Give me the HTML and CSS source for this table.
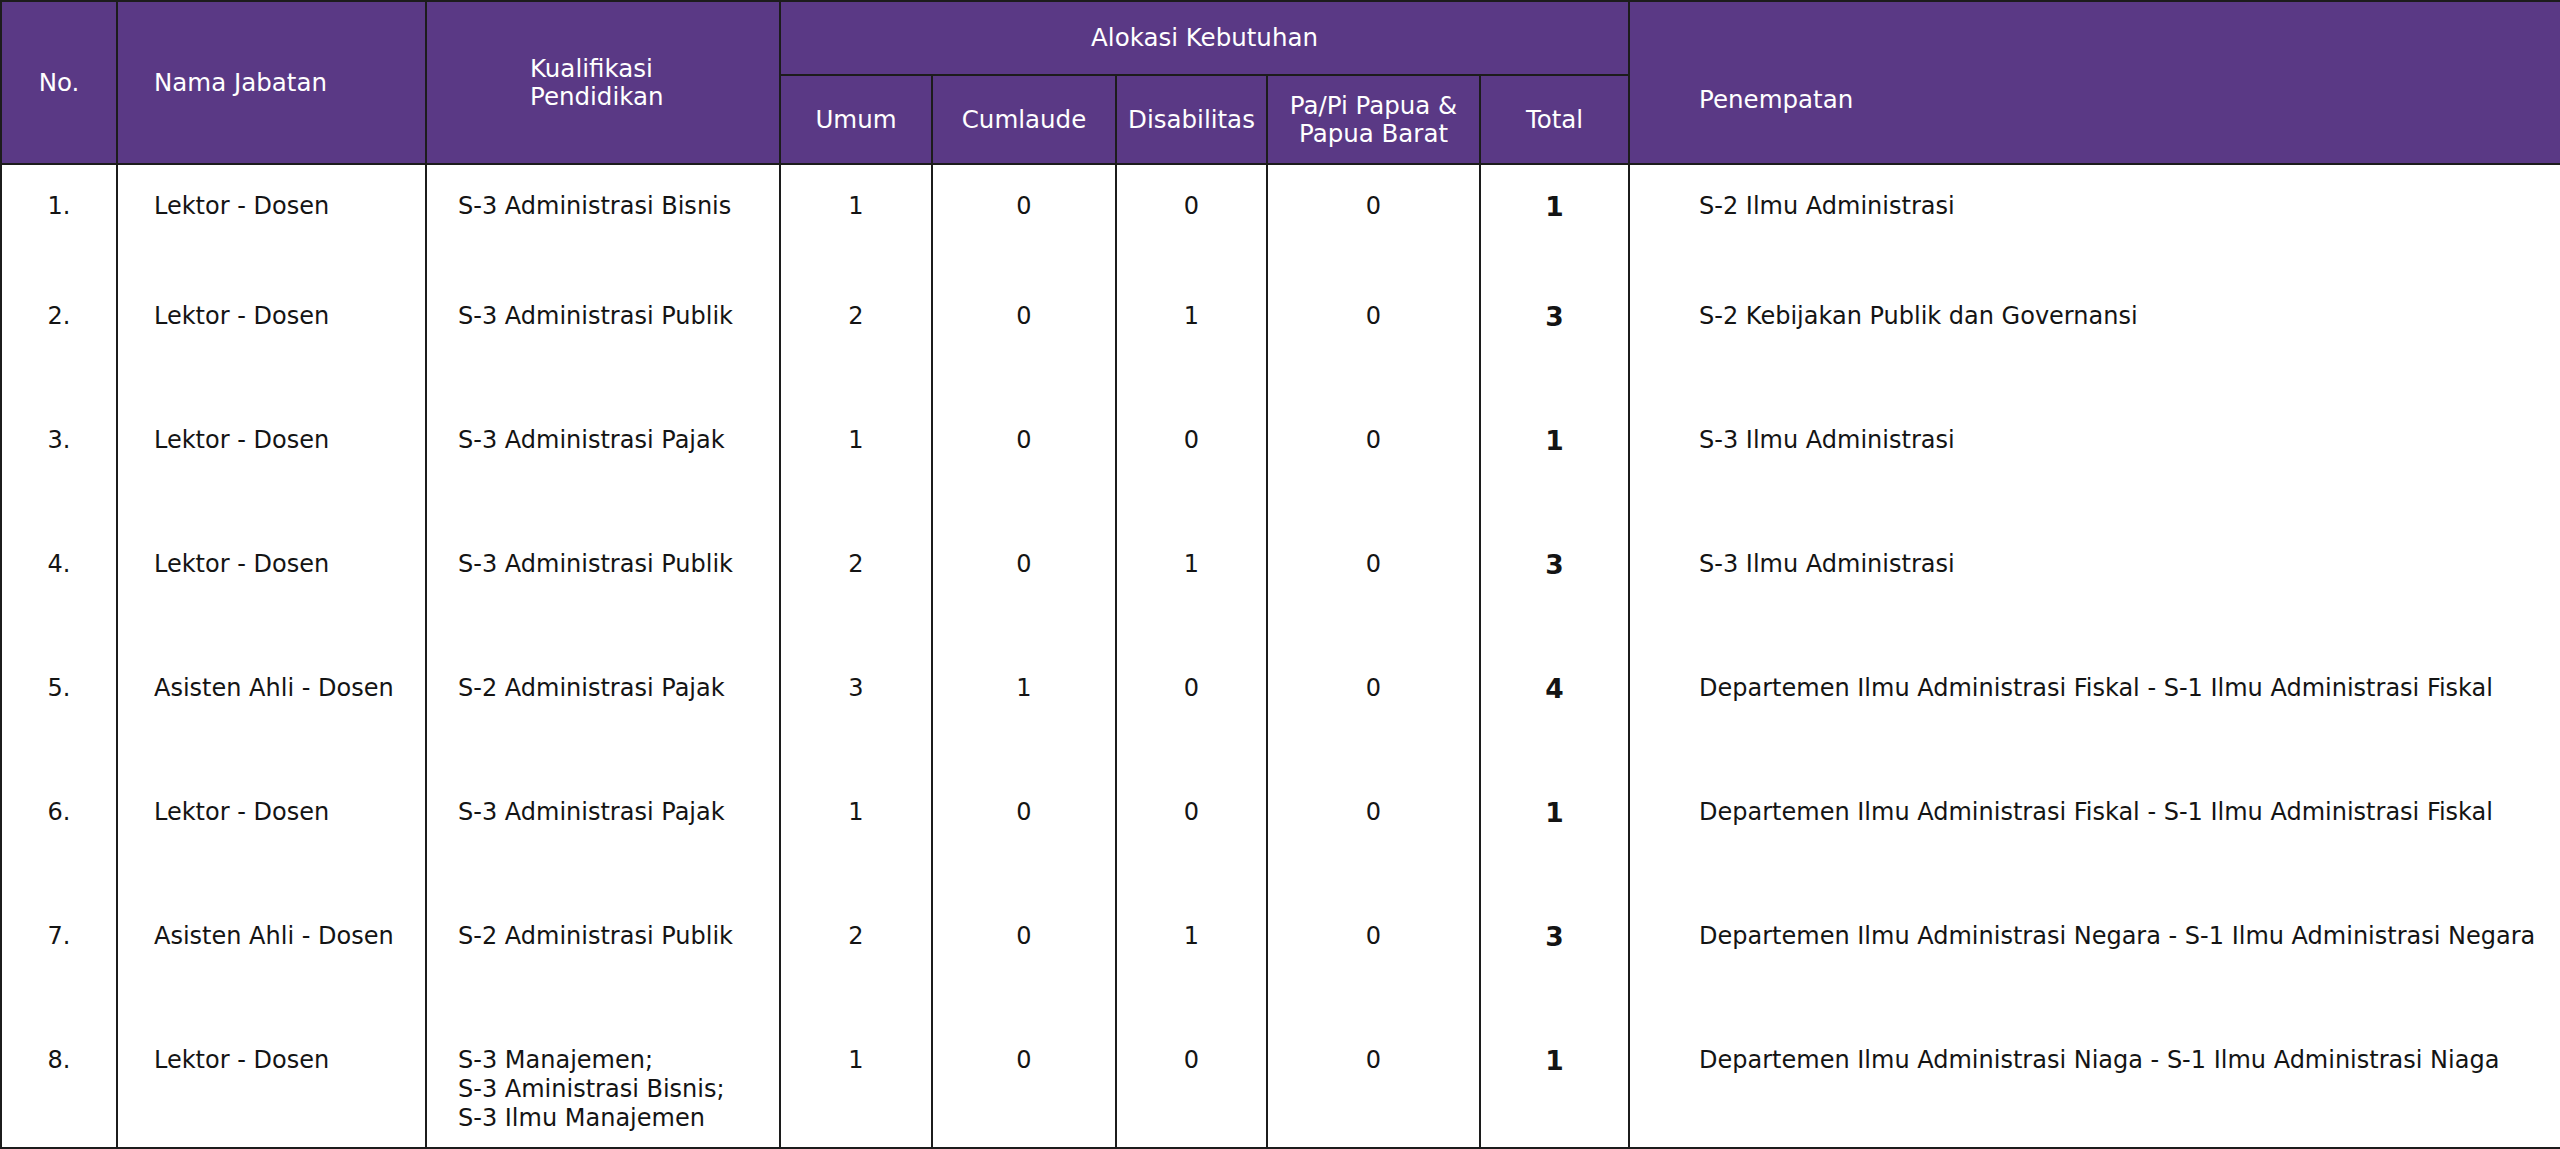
FILE: index.html
```html
<!DOCTYPE html>
<html lang="id">
<head>
<meta charset="utf-8">
<title>Alokasi Kebutuhan Dosen</title>
<link rel="stylesheet" href="styles.css">
</head>
<body>
<table class="formasi">
  <colgroup>
    <col class="c-no">
    <col class="c-nama">
    <col class="c-kual">
    <col class="c-umum">
    <col class="c-cum">
    <col class="c-dis">
    <col class="c-papua">
    <col class="c-total">
    <col class="c-pen">
  </colgroup>
  <thead>
    <tr class="h-top">
      <th rowspan="2" class="center">No.</th>
      <th rowspan="2" class="left">Nama Jabatan</th>
      <th rowspan="2" class="kual-head">Kualifikasi<br>Pendidikan</th>
      <th colspan="5" class="center">Alokasi Kebutuhan</th>
      <th rowspan="2" class="pen-head">Penempatan</th>
    </tr>
    <tr class="h-sub">
      <th class="center">Umum</th>
      <th class="center">Cumlaude</th>
      <th class="center">Disabilitas</th>
      <th class="center">Pa/Pi Papua &amp;<br>Papua Barat</th>
      <th class="center">Total</th>
    </tr>
  </thead>
  <tbody>
    <tr>
      <td class="center">1.</td><td class="nama">Lektor - Dosen</td><td class="kual">S-3 Administrasi Bisnis</td>
      <td class="center">1</td><td class="center">0</td><td class="center">0</td><td class="center">0</td><td class="total">1</td>
      <td class="pen">S-2 Ilmu Administrasi</td>
    </tr>
    <tr>
      <td class="center">2.</td><td class="nama">Lektor - Dosen</td><td class="kual">S-3 Administrasi Publik</td>
      <td class="center">2</td><td class="center">0</td><td class="center">1</td><td class="center">0</td><td class="total">3</td>
      <td class="pen">S-2 Kebijakan Publik dan Governansi</td>
    </tr>
    <tr>
      <td class="center">3.</td><td class="nama">Lektor - Dosen</td><td class="kual">S-3 Administrasi Pajak</td>
      <td class="center">1</td><td class="center">0</td><td class="center">0</td><td class="center">0</td><td class="total">1</td>
      <td class="pen">S-3 Ilmu Administrasi</td>
    </tr>
    <tr>
      <td class="center">4.</td><td class="nama">Lektor - Dosen</td><td class="kual">S-3 Administrasi Publik</td>
      <td class="center">2</td><td class="center">0</td><td class="center">1</td><td class="center">0</td><td class="total">3</td>
      <td class="pen">S-3 Ilmu Administrasi</td>
    </tr>
    <tr>
      <td class="center">5.</td><td class="nama">Asisten Ahli - Dosen</td><td class="kual">S-2 Administrasi Pajak</td>
      <td class="center">3</td><td class="center">1</td><td class="center">0</td><td class="center">0</td><td class="total">4</td>
      <td class="pen">Departemen Ilmu Administrasi Fiskal - S-1 Ilmu Administrasi Fiskal</td>
    </tr>
    <tr>
      <td class="center">6.</td><td class="nama">Lektor - Dosen</td><td class="kual">S-3 Administrasi Pajak</td>
      <td class="center">1</td><td class="center">0</td><td class="center">0</td><td class="center">0</td><td class="total">1</td>
      <td class="pen">Departemen Ilmu Administrasi Fiskal - S-1 Ilmu Administrasi Fiskal</td>
    </tr>
    <tr>
      <td class="center">7.</td><td class="nama">Asisten Ahli - Dosen</td><td class="kual">S-2 Administrasi Publik</td>
      <td class="center">2</td><td class="center">0</td><td class="center">1</td><td class="center">0</td><td class="total">3</td>
      <td class="pen">Departemen Ilmu Administrasi Negara - S-1 Ilmu Administrasi Negara</td>
    </tr>
    <tr>
      <td class="center">8.</td><td class="nama">Lektor - Dosen</td><td class="kual">S-3 Manajemen;<br>S-3 Aministrasi Bisnis;<br>S-3 Ilmu Manajemen</td>
      <td class="center">1</td><td class="center">0</td><td class="center">0</td><td class="center">0</td><td class="total">1</td>
      <td class="pen">Departemen Ilmu Administrasi Niaga - S-1 Ilmu Administrasi Niaga</td>
    </tr>
  </tbody>
</table>
</body>
</html>
```

FILE: styles.css
```css
html, body {
  margin: 0;
  padding: 0;
  background: #ffffff;
}

body {
  font-family: "DejaVu Sans", "Liberation Sans", sans-serif;
  color: #141414;
}

.formasi {
  width: 2560px;
  border-collapse: collapse;
  table-layout: fixed;
  border: 2px solid #1c1c1c;
}

.c-no { width: 116px; }
.c-nama { width: 309px; }
.c-kual { width: 354px; }
.c-umum { width: 152px; }
.c-cum { width: 184px; }
.c-dis { width: 151px; }
.c-papua { width: 213px; }
.c-total { width: 149px; }
.c-pen { width: 932px; }

.formasi th {
  background: #5a3985;
  color: #ffffff;
  font-weight: 400;
  font-size: 24.5px;
  line-height: 28px;
  border: 2px solid #1c1c1c;
  padding: 0;
  vertical-align: middle;
  white-space: nowrap;
}

.h-top { height: 74px; }
.h-sub { height: 89px; }

.formasi th.center { text-align: center; }
.formasi th.left { text-align: left; padding-left: 36px; }
.formasi th.kual-head { text-align: left; padding-left: 103px; }
.formasi th.pen-head { text-align: left; padding-left: 69px; padding-top: 34px; }

.formasi td {
  font-size: 24px;
  line-height: 29px;
  border-left: 2px solid #1c1c1c;
  border-right: 2px solid #1c1c1c;
  vertical-align: top;
  padding: 27px 0 14px 0;
  white-space: nowrap;
}

.formasi tbody tr { height: 124px; }
.formasi tbody tr:first-child { height: 111px; }

.formasi td.center { text-align: center; }
.formasi td.nama { padding-left: 36px; }
.formasi td.kual { padding-left: 31px; }
.formasi td.pen { padding-left: 69px; }
.formasi td.total {
  text-align: center;
  font-weight: 700;
  font-size: 26.5px;
}
```
